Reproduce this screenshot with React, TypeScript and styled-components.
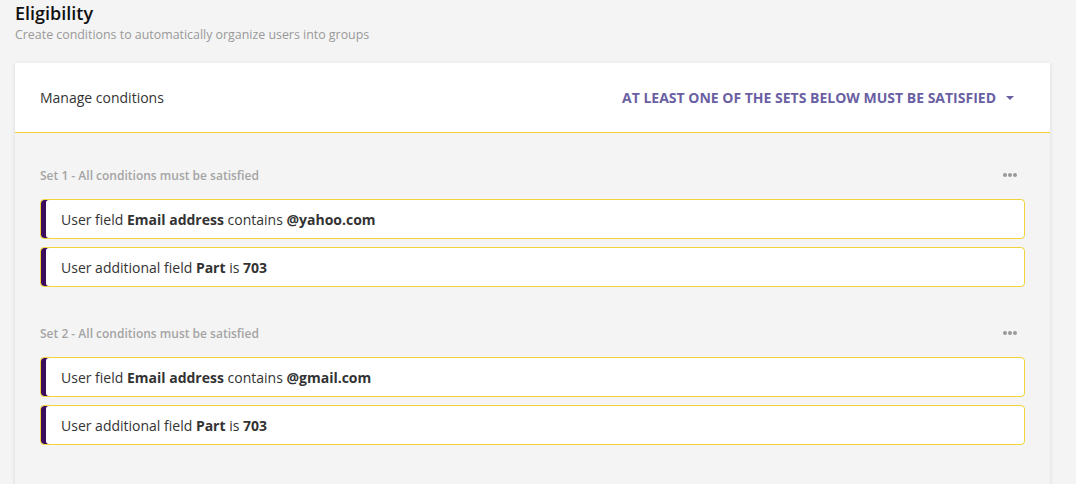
import React from 'react';
import styled, { createGlobalStyle } from 'styled-components';

const GlobalStyle = createGlobalStyle`
  body {
    margin: 0;
    background: #f4f4f4;
    font-family: 'Open Sans', 'Noto Sans', sans-serif;
    color: #333;
  }
`;

const Page = styled.div`
  padding: 1px 26px 0 15px;
`;

const Title = styled.h1`
  margin: 0;
  font-size: 18px;
  font-weight: 600;
  line-height: 24px;
  color: #111;
`;

const Subtitle = styled.p`
  margin: 2px 0 0;
  font-size: 12.4px;
  line-height: 16px;
  color: #999;
`;

const Card = styled.div`
  margin-top: 20px;
  background: #f4f4f4;
  box-shadow: 0 1px 4px rgba(0, 0, 0, 0.12);
`;

const CardHeader = styled.div`
  display: flex;
  align-items: center;
  justify-content: space-between;
  height: 69px;
  padding: 0 36px 0 25px;
  background: #fff;
  border-bottom: 1px solid #f2d43a;
`;

const HeaderTitle = styled.span`
  font-size: 14px;
  color: #333;
`;

const Selector = styled.button`
  display: flex;
  align-items: center;
  gap: 10px;
  padding: 0;
  border: none;
  background: none;
  font-family: inherit;
  font-size: 14px;
  font-weight: 700;
  text-transform: uppercase;
  color: #6a5fa3;
  cursor: pointer;
`;

const Caret = styled.span`
  width: 0;
  height: 0;
  border-left: 4px solid transparent;
  border-right: 4px solid transparent;
  border-top: 4px solid #6a5fa3;
`;

const CardBody = styled.div`
  padding: 34px 25px 50px;
  display: flex;
  flex-direction: column;
  gap: 38px;
`;

const Set = styled.section`
  display: flex;
  flex-direction: column;
  gap: 8px;
`;

const SetHeader = styled.div`
  display: flex;
  align-items: center;
  justify-content: space-between;
  height: 16px;
  margin-bottom: 8px;
`;

const SetLabel = styled.span`
  font-size: 12px;
  font-weight: 600;
  color: #a4a4a4;
`;

const Dots = styled.span`
  display: flex;
  gap: 1px;
  margin-right: 8px;
  span {
    width: 4px;
    height: 4px;
    border-radius: 50%;
    background: #999;
  }
`;

const Condition = styled.div`
  display: flex;
  align-items: center;
  height: 40px;
  box-sizing: border-box;
  padding-left: 20px;
  background: #fff;
  border: 1px solid #f2d43a;
  border-radius: 4px;
  box-shadow: inset 5px 0 0 #3b0d5c;
  font-size: 14px;
  color: #333;
  b {
    font-weight: 700;
  }
`;

interface Rule {
  kind: string;
  field: string;
  op: string;
  value: string;
}

const sets: Rule[][] = [
  [
    { kind: 'User field', field: 'Email address', op: 'contains', value: '@yahoo.com' },
    { kind: 'User additional field', field: 'Part', op: 'is', value: '703' },
  ],
  [
    { kind: 'User field', field: 'Email address', op: 'contains', value: '@gmail.com' },
    { kind: 'User additional field', field: 'Part', op: 'is', value: '703' },
  ],
];

const App: React.FC = () => (
  <Page>
    <GlobalStyle />
    <Title>Eligibility</Title>
    <Subtitle>Create conditions to automatically organize users into groups</Subtitle>
    <Card>
      <CardHeader>
        <HeaderTitle>Manage conditions</HeaderTitle>
        <Selector>
          At least one of the sets below must be satisfied
          <Caret />
        </Selector>
      </CardHeader>
      <CardBody>
        {sets.map((rules, i) => (
          <Set key={i}>
            <SetHeader>
              <SetLabel>Set {i + 1} - All conditions must be satisfied</SetLabel>
              <Dots>
                <span />
                <span />
                <span />
              </Dots>
            </SetHeader>
            {rules.map((r, j) => (
              <Condition key={j}>
                <span>
                  {r.kind} <b>{r.field}</b> {r.op} <b>{r.value}</b>
                </span>
              </Condition>
            ))}
          </Set>
        ))}
      </CardBody>
    </Card>
  </Page>
);

export default App;
